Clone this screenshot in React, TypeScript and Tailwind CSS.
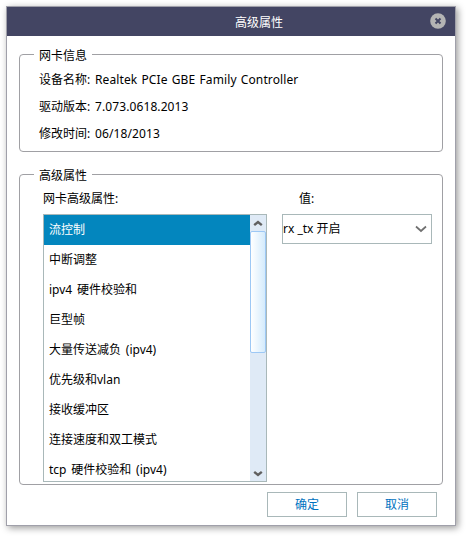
import React from 'react';

const properties = [
  '流控制',
  '中断调整',
  'ipv4 硬件校验和',
  '巨型帧',
  '大量传送减负 (ipv4)',
  '优先级和vlan',
  '接收缓冲区',
  '连接速度和双工模式',
  'tcp 硬件校验和 (ipv4)',
];

const info = [
  { label: '设备名称:', value: 'Realtek PCIe GBE Family Controller' },
  { label: '驱动版本:', value: '7.073.0618.2013' },
  { label: '修改时间:', value: '06/18/2013' },
];

function Group({ title, className, children }: { title: string; className: string; children: React.ReactNode }) {
  return (
    <section className={`flex flex-col rounded-[4px] border border-[#a0a0a4] ${className}`}>
      <h2 className="-mt-[9px] ml-[14px] h-[18px] w-[58px] shrink-0 bg-white pl-[5px] leading-[20px]">{title}</h2>
      {children}
    </section>
  );
}

function ScrollBar() {
  return (
    <div className="flex w-4 shrink-0 flex-col items-center bg-[#dfeaf6]">
      <div className="flex h-4 w-4 items-center justify-center">
        <svg width="10" height="7" viewBox="0 0 10 7" fill="none" stroke="#606060" strokeWidth="2.4">
          <path d="M1.2 5.2 5 2l3.8 3.2" />
        </svg>
      </div>
      <div className="h-[122px] w-4 rounded-[2px] border border-[#9dc8f5] bg-linear-to-r from-white to-[#d4ebfc]" />
      <div className="mt-auto flex h-4 w-4 items-center justify-center">
        <svg width="10" height="7" viewBox="0 0 10 7" fill="none" stroke="#606060" strokeWidth="2.4">
          <path d="M1.2 1.8 5 5l3.8-3.2" />
        </svg>
      </div>
    </div>
  );
}

export default function App() {
  return (
    <div className="h-[536px] w-[466px] bg-white pt-1.5 pl-1.5 font-['Noto_Sans','Noto_Sans_CJK_SC',sans-serif] text-[12px] text-black">
      <main className="flex h-[520px] w-[450px] flex-col border border-[#a0a0aa] bg-white shadow-[2px_2px_7px_rgba(0,0,0,0.4)]">
        <header className="flex h-[29px] shrink-0 items-center bg-[#434563] text-white">
          <h1 className="ml-[228px] flex-1 pt-px leading-[29px]">高级属性</h1>
          <button className="mr-[9px] -mt-px h-4 w-4" aria-label="关闭">
            <svg width="16" height="16" viewBox="0 0 16 16">
              <circle cx="8" cy="8" r="7.8" fill="#b4b4b4" />
              <path d="m5.5 5.5 5 5m0-5-5 5" stroke="#434563" strokeWidth="2" />
            </svg>
          </button>
        </header>
        <Group title="网卡信息" className="mt-[18px] ml-3 h-[98px] w-[424px] shrink-0">
          <dl className="mt-[2px] ml-[19px]">
            {info.map((item) => (
              <div key={item.label} className="flex h-[27px] items-center">
                <dt className="w-14">{item.label}</dt>
                <dd className="tracking-[0.1px] [word-spacing:1px]">{item.value}</dd>
              </div>
            ))}
          </dl>
        </Group>
        <Group title="高级属性" className="mt-[22px] ml-3 h-[311px] w-[424px] shrink-0">
          <div className="flex">
            <div className="ml-[23px] w-[224px]">
              <p className="mt-[5px] h-[25px] leading-[20px]">网卡高级属性:</p>
              <div className="flex h-[268px] border border-[#a9b8b9]">
                <ul className="min-w-0 flex-1 overflow-hidden [word-spacing:1.7px]">
                  {properties.map((name, i) => (
                    <li
                      key={name}
                      className={`h-[30px] pl-[5px] leading-[30px] whitespace-nowrap ${i === 0 ? 'bg-[#0386be] text-white' : ''}`}
                    >
                      {name}
                    </li>
                  ))}
                </ul>
                <ScrollBar />
              </div>
            </div>
            <div className="ml-[15px] w-[150px]">
              <p className="mt-[5px] h-[25px] pl-[17px] leading-[20px]">值:</p>
              <div className="flex h-[30px] items-center justify-between border border-[#a9b8b9] pr-1">
                <span>rx _tx 开启</span>
                <svg width="12" height="8" viewBox="0 0 12 8" fill="none" stroke="#707070" strokeWidth="1.7">
                  <path d="m1 1.5 5 4.5 5-4.5" />
                </svg>
              </div>
            </div>
          </div>
        </Group>
        <footer className="mt-[7px] mr-[18px] flex justify-end gap-2.5 text-[#0072c0]">
          <button className="h-[25px] w-20 border border-[#a9b8b9] leading-[23px]">确定</button>
          <button className="h-[25px] w-20 border border-[#a9b8b9] leading-[23px]">取消</button>
        </footer>
      </main>
    </div>
  );
}
